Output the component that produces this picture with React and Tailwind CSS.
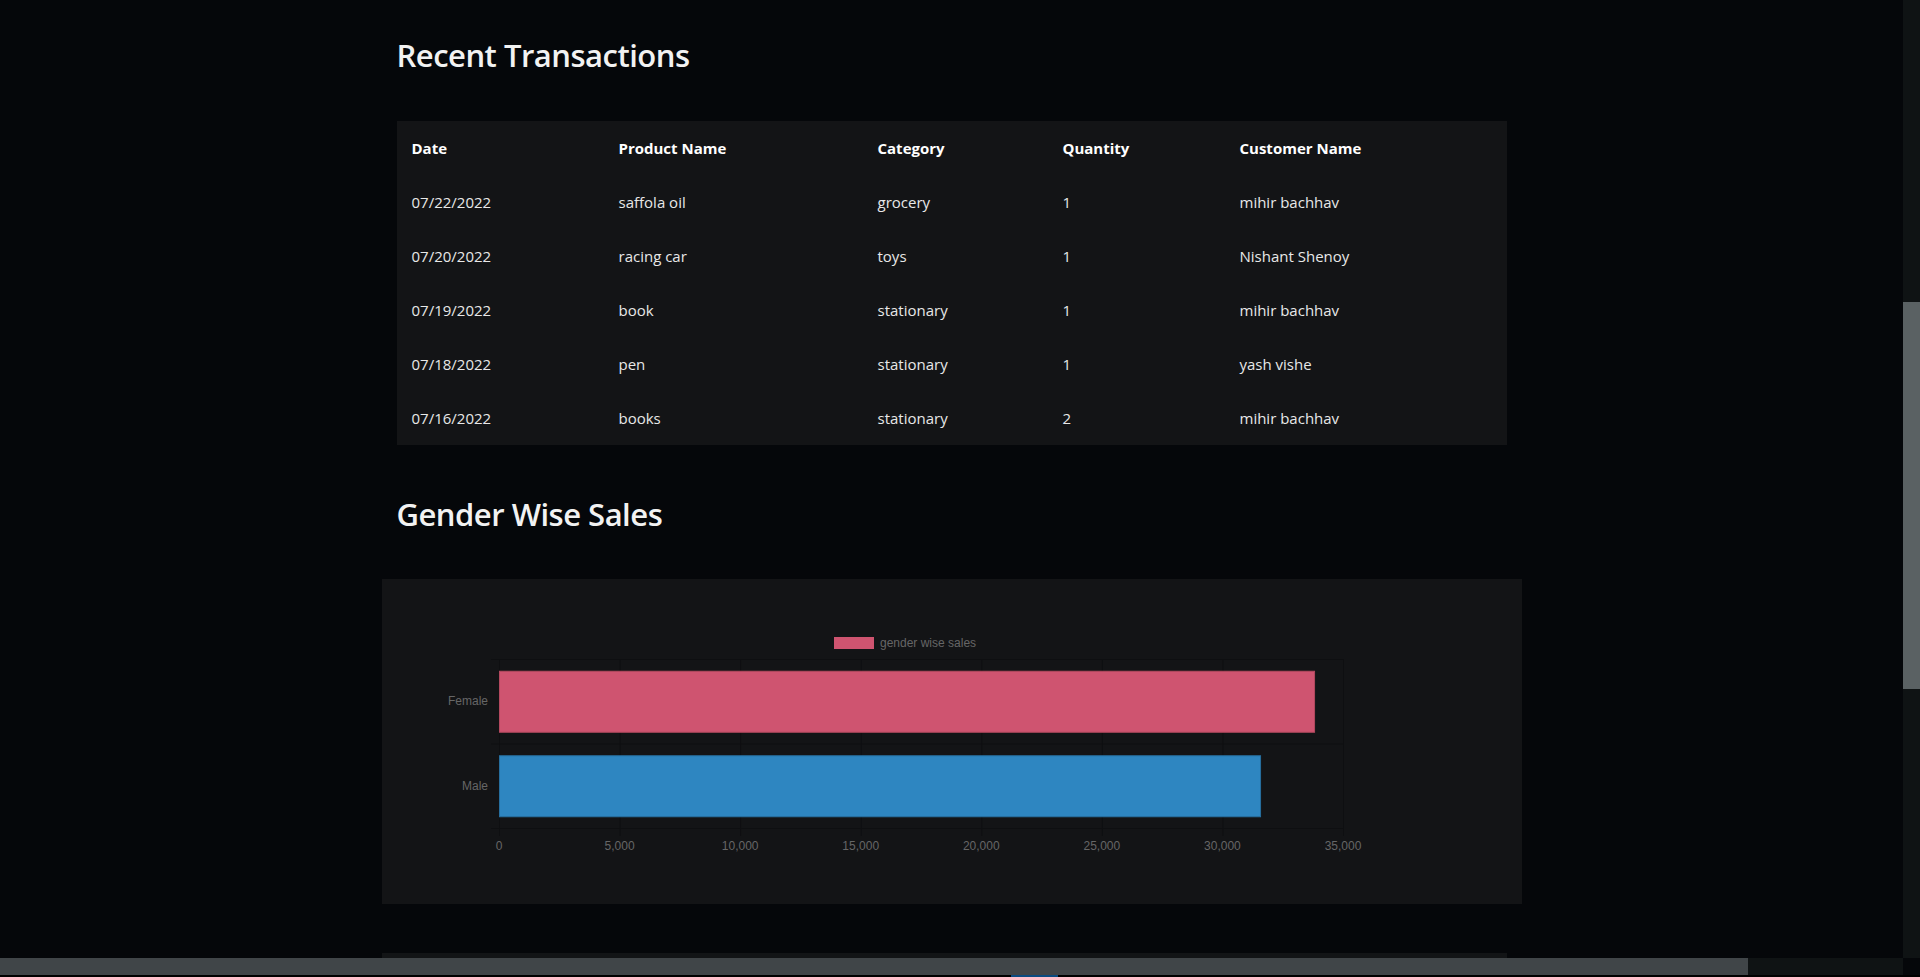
import React from 'react';

const transactions = [
    { date: '07/22/2022', product: 'saffola oil', category: 'grocery', qty: 1, customer: 'mihir bachhav' },
    { date: '07/20/2022', product: 'racing car', category: 'toys', qty: 1, customer: 'Nishant Shenoy' },
    { date: '07/19/2022', product: 'book', category: 'stationary', qty: 1, customer: 'mihir bachhav' },
    { date: '07/18/2022', product: 'pen', category: 'stationary', qty: 1, customer: 'yash vishe' },
    { date: '07/16/2022', product: 'books', category: 'stationary', qty: 2, customer: 'mihir bachhav' },
];

const genderSales = [
    { label: 'Female', value: 33800, fill: '#cf5470', stroke: '#b3495f' },
    { label: 'Male', value: 31560, fill: '#2e86c1', stroke: '#276f9f' },
];

// plot area inside the chart card
const PLOT = { left: 117, right: 961, top: 80, bottom: 249, max: 35000 };

const GenderChart = () => {
    const w = PLOT.right - PLOT.left;
    const band = (PLOT.bottom - PLOT.top) / genderSales.length;
    const ticks = [0, 5000, 10000, 15000, 20000, 25000, 30000, 35000];
    const x = (v) => PLOT.left + (v / PLOT.max) * w;

    return (
        <svg width="1140" height="325" viewBox="0 0 1140 325" className="block">
            {/* legend */}
            <rect x="452" y="58" width="40" height="12" fill="#cf5470" />
            <text x="498" y="68" fontSize="12" fill="#666" fontFamily="'Liberation Sans', Arial, sans-serif">gender wise sales</text>

            {/* grid */}
            {ticks.map((t) => (
                <line key={t} x1={x(t) + 0.5} x2={x(t) + 0.5} y1={PLOT.top} y2={PLOT.bottom + 8} stroke="#0e0f11" strokeWidth="1" />
            ))}
            {[0, 1, 2].map((i) => (
                <line key={i} x1={PLOT.left - 8} x2={PLOT.right} y1={PLOT.top + i * band + 0.5} y2={PLOT.top + i * band + 0.5} stroke="#0e0f11" strokeWidth="1" />
            ))}

            {/* bars */}
            {genderSales.map((d, i) => {
                const cy = PLOT.top + band * i + band / 2;
                return (
                    <g key={d.label}>
                        <rect x={PLOT.left + 0.5} y={cy - 30} width={x(d.value) - PLOT.left} height="61" fill={d.fill} stroke={d.stroke} strokeWidth="1" />
                        <text x="106" y={cy + 4} textAnchor="end" fontSize="12" fill="#666" fontFamily="'Liberation Sans', Arial, sans-serif">{d.label}</text>
                    </g>
                );
            })}

            {/* x ticks */}
            {ticks.map((t) => (
                <text key={t} x={x(t)} y="271" textAnchor="middle" fontSize="12" fill="#666" fontFamily="'Liberation Sans', Arial, sans-serif">
                    {t.toLocaleString('en-US')}
                </text>
            ))}
        </svg>
    );
};

const App = () => {
    return (
        <div className="h-screen w-full flex flex-col overflow-hidden bg-[#05070a] font-['Segoe_UI','Open_Sans',sans-serif]">
            <div className="flex flex-1 min-h-0">
                <main className="flex-1 overflow-hidden">
                    <div className="w-[1140px] mx-auto">
                        <h1 className="px-[15px] pt-[31px] text-[31px] leading-[48px] tracking-[-0.5px] font-semibold text-[#f2f2f2]">Recent Transactions</h1>

                        <div className="px-[15px] mt-[42px]">
                            <table className="w-full table-fixed bg-[#131416] text-[15px] text-[#e8e8e8]">
                                <colgroup>
                                    <col className="w-[207px]" />
                                    <col className="w-[259px]" />
                                    <col className="w-[185px]" />
                                    <col className="w-[177px]" />
                                    <col />
                                </colgroup>
                                <thead>
                                    <tr className="h-[54px] text-left text-white">
                                        <th className="pl-[15px] font-bold">Date</th>
                                        <th className="pl-[15px] font-bold">Product Name</th>
                                        <th className="pl-[15px] font-bold">Category</th>
                                        <th className="pl-[15px] font-bold">Quantity</th>
                                        <th className="pl-[15px] font-bold">Customer Name</th>
                                    </tr>
                                </thead>
                                <tbody>
                                    {transactions.map((t) => (
                                        <tr key={t.date} className="h-[54px]">
                                            <td className="pl-[15px]">{t.date}</td>
                                            <td className="pl-[15px]">{t.product}</td>
                                            <td className="pl-[15px]">{t.category}</td>
                                            <td className="pl-[15px]">{t.qty}</td>
                                            <td className="pl-[15px]">{t.customer}</td>
                                        </tr>
                                    ))}
                                </tbody>
                            </table>
                        </div>

                        <h1 className="px-[15px] mt-[45px] text-[31px] leading-[48px] tracking-[-0.5px] font-semibold text-[#f2f2f2]">Gender Wise Sales</h1>

                        <div className="mt-[41px] bg-[#131416]">
                            <GenderChart />
                        </div>

                        <div className="mt-[49px] mr-[15px] h-[40px] bg-[#121416]" />
                    </div>
                </main>

                {/* vertical scrollbar */}
                <div className="w-[17px] flex flex-col bg-[#0f1314]">
                    <div className="h-[302px]" />
                    <div className="h-[387px] bg-[#5a6163]" />
                </div>
            </div>

            {/* horizontal scrollbar */}
            <div className="h-[17px] flex shrink-0">
                <div className="w-[1748px] bg-[#404548]" />
                <div className="flex-1 bg-[#0f1314]" />
                <div className="w-[17px] bg-[#05070a]" />
            </div>
            <div className="h-[2px] flex shrink-0 bg-black">
                <div className="w-[1011px]" />
                <div className="w-[47px] bg-[#0b4a80]" />
            </div>
        </div>
    );
};

export default App;
